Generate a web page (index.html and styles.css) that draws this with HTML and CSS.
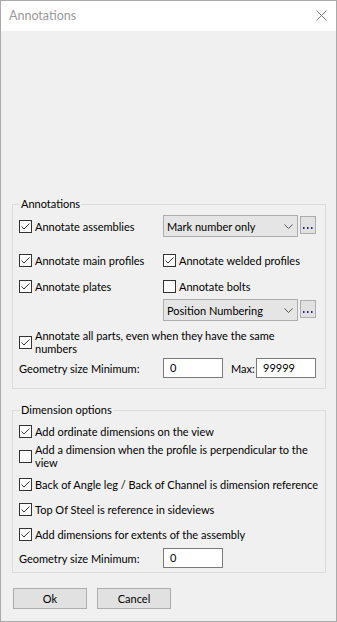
FILE: index.html
```html
<!DOCTYPE html>
<html>
<head>
<meta charset="utf-8">
<link rel="stylesheet" href="styles.css">
</head>
<body>
<div class="window">
  <div class="titlebar">
    <span class="title">Annotations</span>
    <svg class="close" width="11" height="11" viewBox="0 0 11 11"><path d="M0.5 0.5 L10.5 10.5 M10.5 0.5 L0.5 10.5" stroke="#777" stroke-width="1" fill="none"/></svg>
  </div>
  <div class="content">
    <div class="group g1">
      <span class="glabel">Annotations</span>
      <div class="row r1">
        <div class="cell c1"><span class="cb"><svg width="11" height="11" viewBox="0 0 11 11"><polyline points="1.5,5.5 4,8 9.5,2.5" fill="none" stroke="#333" stroke-width="1"/></svg></span><span class="lbl">Annotate assemblies</span></div>
        <div class="cell c2">
          <div class="combo"><span class="ctext">Mark number only</span><svg class="chev" width="9" height="5" viewBox="0 0 9 5"><polyline points="0.5,0.5 4.5,4.5 8.5,0.5" fill="none" stroke="#555" stroke-width="1"/></svg></div>
          <div class="ell"><svg width="14" height="16" viewBox="0 0 14 16"><rect x="2" y="10" width="1.5" height="2" fill="#23237a"/><rect x="6" y="10" width="1.5" height="2" fill="#23237a"/><rect x="10" y="10" width="1.5" height="2" fill="#23237a"/></svg></div>
        </div>
      </div>
      <div class="row r2">
        <div class="cell c1"><span class="cb"><svg width="11" height="11" viewBox="0 0 11 11"><polyline points="1.5,5.5 4,8 9.5,2.5" fill="none" stroke="#333" stroke-width="1"/></svg></span><span class="lbl">Annotate main profiles</span></div>
        <div class="cell c2"><span class="cb"><svg width="11" height="11" viewBox="0 0 11 11"><polyline points="1.5,5.5 4,8 9.5,2.5" fill="none" stroke="#333" stroke-width="1"/></svg></span><span class="lbl">Annotate welded profiles</span></div>
      </div>
      <div class="row r3">
        <div class="cell c1"><span class="cb"><svg width="11" height="11" viewBox="0 0 11 11"><polyline points="1.5,5.5 4,8 9.5,2.5" fill="none" stroke="#333" stroke-width="1"/></svg></span><span class="lbl">Annotate plates</span></div>
        <div class="cell c2"><span class="cb"></span><span class="lbl">Annotate bolts</span></div>
      </div>
      <div class="row r4">
        <div class="cell c1"></div>
        <div class="cell c2">
          <div class="combo"><span class="ctext">Position Numbering</span><svg class="chev" width="9" height="5" viewBox="0 0 9 5"><polyline points="0.5,0.5 4.5,4.5 8.5,0.5" fill="none" stroke="#555" stroke-width="1"/></svg></div>
          <div class="ell"><svg width="14" height="16" viewBox="0 0 14 16"><rect x="2" y="10" width="1.5" height="2" fill="#23237a"/><rect x="6" y="10" width="1.5" height="2" fill="#23237a"/><rect x="10" y="10" width="1.5" height="2" fill="#23237a"/></svg></div>
        </div>
      </div>
      <div class="row r5 multi">
        <span class="cb"><svg width="11" height="11" viewBox="0 0 11 11"><polyline points="1.5,5.5 4,8 9.5,2.5" fill="none" stroke="#333" stroke-width="1"/></svg></span><span class="mlbl">Annotate all parts, even when they have the same numbers</span>
      </div>
      <div class="row r6 geo">
        <span class="glbl">Geometry size Minimum:</span>
        <div class="input">0</div>
        <span class="maxlbl">Max:</span>
        <div class="input">99999</div>
      </div>
    </div>

    <div class="group g2">
      <span class="glabel">Dimension options</span>
      <div class="row d1"><span class="cb"><svg width="11" height="11" viewBox="0 0 11 11"><polyline points="1.5,5.5 4,8 9.5,2.5" fill="none" stroke="#333" stroke-width="1"/></svg></span><span class="lbl">Add ordinate dimensions on the view</span></div>
      <div class="row d2 multi"><span class="cb"></span><span class="mlbl">Add a dimension when the profile is perpendicular to the view</span></div>
      <div class="row d3"><span class="cb"><svg width="11" height="11" viewBox="0 0 11 11"><polyline points="1.5,5.5 4,8 9.5,2.5" fill="none" stroke="#333" stroke-width="1"/></svg></span><span class="lbl">Back of Angle leg / Back of Channel is dimension reference</span></div>
      <div class="row d4"><span class="cb"><svg width="11" height="11" viewBox="0 0 11 11"><polyline points="1.5,5.5 4,8 9.5,2.5" fill="none" stroke="#333" stroke-width="1"/></svg></span><span class="lbl">Top Of Steel is reference in sideviews</span></div>
      <div class="row d5"><span class="cb"><svg width="11" height="11" viewBox="0 0 11 11"><polyline points="1.5,5.5 4,8 9.5,2.5" fill="none" stroke="#333" stroke-width="1"/></svg></span><span class="lbl">Add dimensions for extents of the assembly</span></div>
      <div class="row d6 geo">
        <span class="glbl">Geometry size Minimum:</span>
        <div class="input">0</div>
      </div>
    </div>

    <div class="buttons">
      <div class="btn">Ok</div>
      <div class="btn">Cancel</div>
    </div>
  </div>
</div>
</body>
</html>
```
FILE: styles.css
```css
html, body {
  margin: 0;
  padding: 0;
  background: #f0f0f0;
}
* { box-sizing: border-box; }

.window {
  width: 337px;
  height: 622px;
  border: 1px solid #aaaaaa;
  background: #f0f0f0;
  font-family: Lato, "Liberation Sans", sans-serif;
  font-size: 11px;
  color: #000;
  display: flex;
  flex-direction: column;
}

.titlebar {
  height: 30px;
  background: #ffffff;
  display: flex;
  align-items: center;
  justify-content: space-between;
  padding: 0 9px 1px 8px;
  flex: none;
}
.title {
  font-size: 12.5px;
  color: #999999;
}
.close {
  display: block;
}

.content {
  flex: 1;
  padding: 173px 0 0 11px;
  display: flex;
  flex-direction: column;
}

.group {
  position: relative;
  width: 314px;
  border: 1px solid #dcdcdc;
  padding-left: 6px;
  display: flex;
  flex-direction: column;
}
.g1 { padding-top: 10px; padding-bottom: 10px; }
.g2 { margin-top: 21px; padding-top: 9px; padding-bottom: 4px; }

.glabel {
  position: absolute;
  top: -8px;
  left: 7px;
  padding: 0 1px;
  line-height: 14px;
  background: #f0f0f0;
  white-space: nowrap;
}

.row {
  display: flex;
  align-items: center;
  height: 22px;
  flex: none;
}
.cell {
  display: flex;
  align-items: center;
  height: 100%;
}
.c1 { width: 144px; }
.c2 { flex: 1; }

.r2 { margin-top: 12px; }
.r3 { margin-top: 4px; }
.r4 { margin-top: 2px; }
.r5 { margin-top: 8px; height: 26px; }
.r6 { margin-top: 3px; height: 20px; }

.d2 { margin-top: 1px; height: 26px; }
.d3 { margin-top: 4px; }
.d4 { margin-top: 3px; }
.d5 { margin-top: 3px; }
.d6 { margin-top: 3px; height: 20px; }

.cb {
  width: 13px;
  height: 13px;
  border: 1px solid #333333;
  background: #ffffff;
  flex: none;
  margin-right: 3px;
  display: flex;
}
.cb svg { display: block; }

.lbl { white-space: nowrap; }
.mlbl {
  width: 280px;
  line-height: 13px;
}

.combo {
  width: 135px;
  height: 22px;
  border: 1px solid #adadad;
  background: #e5e5e5;
  display: flex;
  align-items: center;
  justify-content: space-between;
  padding: 0 4px 0 3px;
}
.ctext { white-space: nowrap; }
.chev { display: block; }
.ell {
  width: 16px;
  height: 18px;
  margin-left: 2px;
  border: 1px solid #adadad;
  background: #e1e1e1;
  align-self: flex-start;
  margin-top: 1px;
}
.ell svg { display: block; }

.geo .glbl {
  width: 144px;
  white-space: nowrap;
}
.input {
  width: 60px;
  height: 20px;
  border: 1px solid #7a7a7a;
  background: #ffffff;
  padding-left: 6px;
  line-height: 18px;
}
.maxlbl {
  margin-left: 8px;
  width: 25px;
}

.buttons {
  display: flex;
  gap: 10px;
  margin-top: 15px;
  padding-left: 1px;
}
.btn {
  width: 74px;
  height: 21px;
  border: 1px solid #adadad;
  background: #e1e1e1;
  text-align: center;
  line-height: 19px;
}
```
